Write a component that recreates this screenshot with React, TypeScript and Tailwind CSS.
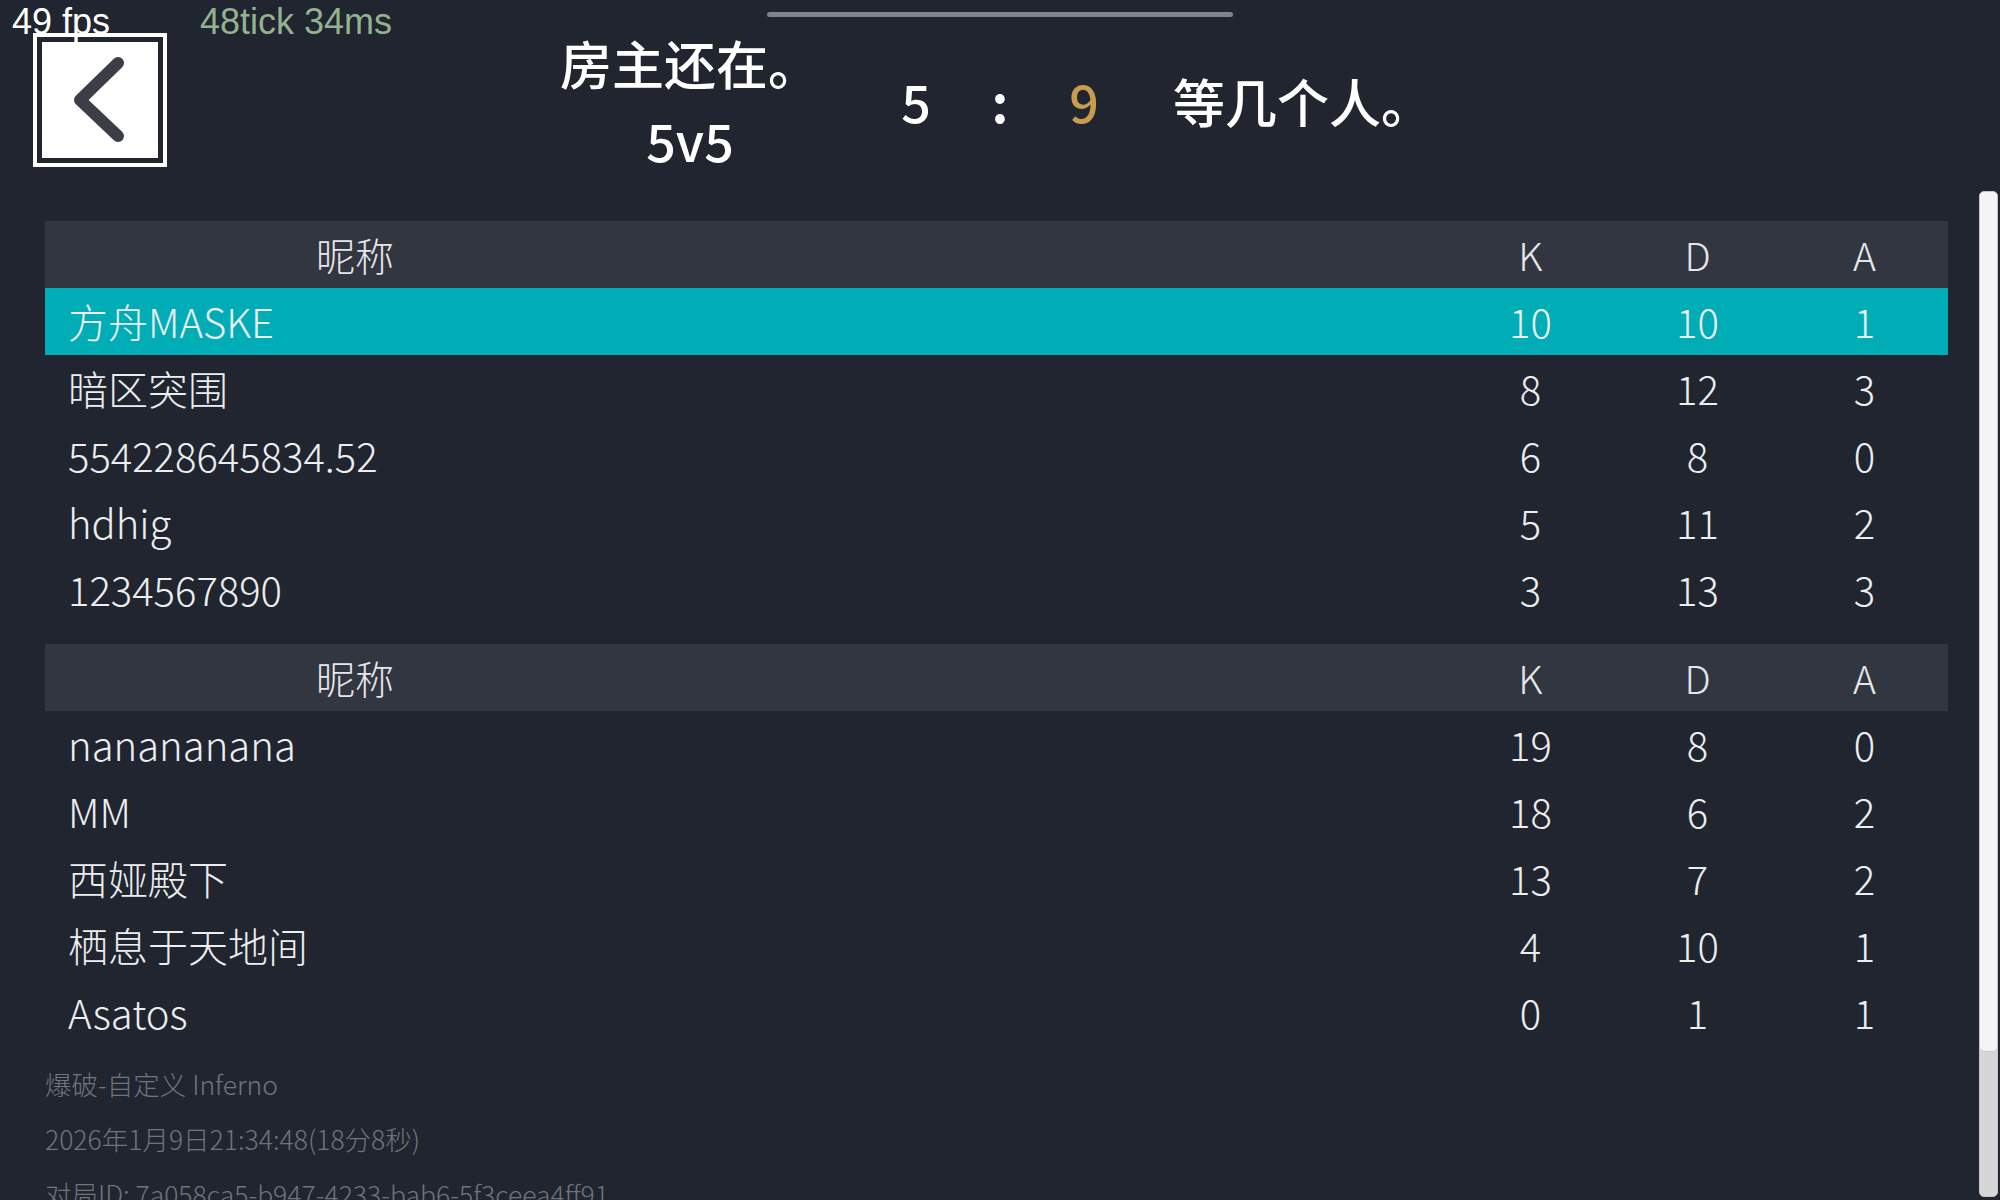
import React from "react";

const team1 = [
  { name: "方舟MASKE", k: 10, d: 10, a: 1, hl: true },
  { name: "暗区突围", k: 8, d: 12, a: 3 },
  { name: "554228645834.52", k: 6, d: 8, a: 0 },
  { name: "hdhig", k: 5, d: 11, a: 2 },
  { name: "1234567890", k: 3, d: 13, a: 3 },
];
const team2 = [
  { name: "nanananana", k: 19, d: 8, a: 0 },
  { name: "MM", k: 18, d: 6, a: 2 },
  { name: "西娅殿下", k: 13, d: 7, a: 2 },
  { name: "栖息于天地间", k: 4, d: 10, a: 1 },
  { name: "Asatos", k: 0, d: 1, a: 1 },
];

type Row = { name: string; k: number; d: number; a: number; hl?: boolean };

function Table({ rows }: { rows: Row[] }) {
  return (
    <div className="w-[1903px] ml-[45px] flex flex-col">
      <div className="h-[67px] bg-[#323640] flex items-center text-[39px] font-light text-[#e6e7ea]">
        <div className="w-[620px] text-center">昵称</div>
        <div className="flex-1" />
        <div className="w-[167px] text-center">K</div>
        <div className="w-[167px] text-center">D</div>
        <div className="w-[167px] text-center">A</div>
      </div>
      {rows.map((r) => (
        <div
          key={r.name}
          className={
            "h-[67px] flex items-center text-[40px] font-light text-[#eceef0] " +
            (r.hl ? "bg-[#00adb6]" : "")
          }
        >
          <div className="flex-1 pl-[23px] -mt-[2px]">{r.name}</div>
          <div className="w-[167px] text-center -mt-[2px]">{r.k}</div>
          <div className="w-[167px] text-center -mt-[2px]">{r.d}</div>
          <div className="w-[167px] text-center -mt-[2px]">{r.a}</div>
        </div>
      ))}
    </div>
  );
}

export default function App() {
  return (
    <div
      className="w-[2000px] h-[1200px] bg-[#20252f] relative overflow-hidden text-white"
      style={{ fontFamily: '"Noto Sans CJK SC", "Noto Sans", sans-serif' }}
    >
      {/* header */}
      <div className="flex items-start pl-[33px] pt-[33px] h-[221px]">
        <div className="w-[134px] h-[134px] border-[4px] border-white p-[5px] shrink-0">
          <div className="w-full h-full bg-white">
            <svg width="116" height="116" viewBox="0 0 116 116">
              <polyline
                points="76,21 38,58 76,94"
                fill="none"
                stroke="#3b3e46"
                strokeWidth="12"
                strokeLinecap="round"
                strokeLinejoin="round"
              />
            </svg>
          </div>
        </div>
        <div className="ml-[373px] w-[300px] -mt-[2px] flex flex-col items-center font-medium">
          <div className="h-[64px] leading-[64px] text-[52px]">房主还在。</div>
          <div className="mt-[13px] h-[64px] leading-[64px] text-[52px]">5v5</div>
        </div>
        <div className="ml-[34px] mt-[36px] flex items-center h-[64px] font-medium">
          <div className="w-[84px] text-center text-[52px]">5</div>
          <div className="w-[84px] text-center text-[52px] font-bold">:</div>
          <div className="w-[84px] text-center text-[52px] text-[#c99b4c]">9</div>
          <div className="ml-[47px] text-[52px]">等几个人。</div>
        </div>
      </div>

      <Table rows={team1} />
      <div className="h-[21px]" />
      <Table rows={team2} />

      <div className="ml-[45px] mt-[10px] text-[26.5px] font-light text-[#6f747d] flex flex-col">
        <div className="h-[55px] leading-[55px] whitespace-nowrap">爆破-自定义 Inferno</div>
        <div className="h-[55px] leading-[55px] whitespace-nowrap">2026年1月9日21:34:48(18分8秒)</div>
        <div className="h-[55px] leading-[55px] whitespace-nowrap">对局ID: 7a058ca5-b947-4233-bab6-5f3ceea4ff91</div>
      </div>

      {/* overlays */}
      <div className="absolute left-[767px] top-[12px] w-[466px] h-[5px] rounded-full bg-[#80838a]" />
      <div
        className="absolute left-[12px] top-[4px] text-[36px] leading-none text-white"
        style={{ fontFamily: '"Liberation Sans", Arial, sans-serif' }}
      >
        49 fps
      </div>
      <div
        className="absolute left-[200px] top-[4px] text-[36px] leading-none text-[#93b28f]"
        style={{ fontFamily: '"Liberation Sans", Arial, sans-serif' }}
      >
        48tick 34ms
      </div>
      <div className="absolute left-[1979px] top-[191px] w-[19px] h-[1006px] rounded-[5px] bg-[#d6d6d6] border border-[#c4c4c4] overflow-hidden">
        <div className="h-[860px] bg-[#f4f4f4] rounded-b-[5px] border-b border-[#c8c8c8]" />
      </div>
    </div>
  );
}
